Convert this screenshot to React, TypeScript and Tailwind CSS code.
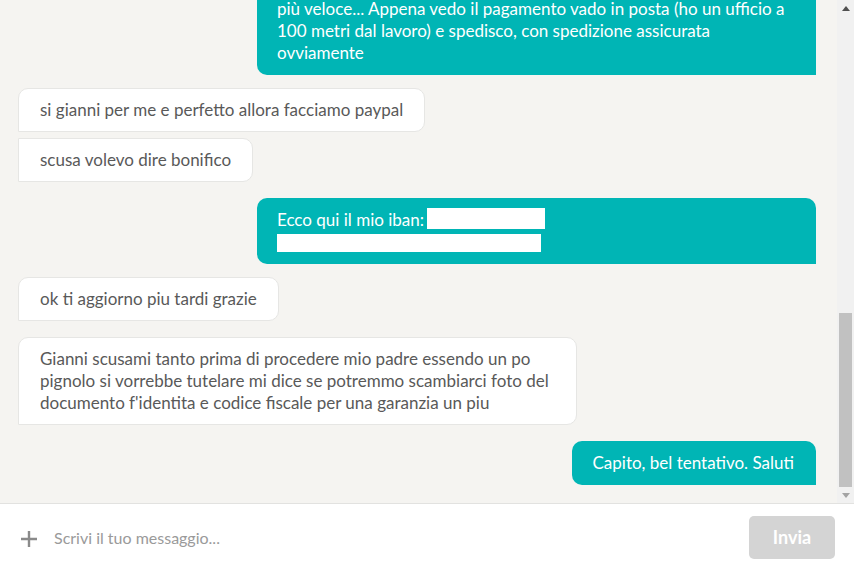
import React from 'react';

type Msg = { id: number; from: 'me' | 'them'; lines: React.ReactNode[]; first?: boolean; mt: string; wide?: boolean };

const MESSAGES: Msg[] = [
  {
    id: 1,
    from: 'me',
    mt: 'mt-0',
    wide: true,
    lines: [
      'più veloce... Appena vedo il pagamento vado in posta (ho un ufficio a',
      '100 metri dal lavoro) e spedisco, con spedizione assicurata',
      'ovviamente',
    ],
  },
  { id: 2, from: 'them', mt: 'mt-[13px]', first: true, lines: ['si gianni per me e perfetto allora facciamo paypal'] },
  { id: 3, from: 'them', mt: 'mt-[6px]', lines: ['scusa volevo dire bonifico'] },
  {
    id: 4,
    from: 'me',
    mt: 'mt-4',
    wide: true,
    lines: [
      <span key="a" className="flex items-start">
        Ecco qui il mio iban:
        <span className="ml-[3px] mt-[-1px] inline-block h-[21px] w-[118px] bg-white" />
      </span>,
      <span key="b" className="block pt-[3px] pb-[1px]">
        <span className="block h-[18px] w-[264px] bg-white" />
      </span>,
    ],
  },
  { id: 5, from: 'them', mt: 'mt-[13px]', first: true, lines: ['ok ti aggiorno piu tardi grazie'] },
  {
    id: 6,
    from: 'them',
    mt: 'mt-4',
    first: true,
    wide: true,
    lines: [
      'Gianni scusami tanto prima di procedere mio padre essendo un po',
      'pignolo si vorrebbe tutelare mi dice se potremmo scambiarci foto del',
      "documento f'identita e codice fiscale per una garanzia un piu",
    ],
  },
  { id: 7, from: 'me', mt: 'mt-4', lines: ['Capito, bel tentativo. Saluti'] },
];

const Bubble: React.FC<{ msg: Msg }> = ({ msg }) => {
  const mine = msg.from === 'me';
  return (
    <div className={`flex ${mine ? 'justify-end' : 'justify-start'} ${msg.mt}`}>
      <div
        className={`whitespace-nowrap text-[17px] leading-[22px] ${msg.wide ? 'w-[559px]' : ''} ${
          mine
            ? 'rounded-tl-[10px] rounded-tr-[10px] rounded-bl-[10px] bg-[#00b5b5] py-[11px] pl-[20px] pr-[22px] text-white'
            : `border border-[#e6e6e4] bg-white py-[10px] pl-[21px] pr-[21px] text-[#595959] rounded-tr-[10px] rounded-br-[10px] ${
                msg.first ? 'rounded-tl-[10px]' : ''
              }`
        }`}
      >
        {msg.lines.map((l, i) => (
          <div key={i}>{l}</div>
        ))}
      </div>
    </div>
  );
};

export default function App() {
  return (
    <div className="flex h-[571px] w-[854px] flex-col bg-white" style={{ fontFamily: 'Lato, "Liberation Sans", sans-serif' }}>
      {/* conversation */}
      <div className="flex h-[504px] shrink-0 border-b border-[#e2e2e0] bg-[#f5f4f1]">
        <div className="flex flex-1 flex-col justify-end overflow-hidden pl-[18px] pr-[21px] pb-[18px]">
          {MESSAGES.map(m => (
            <Bubble key={m.id} msg={m} />
          ))}
        </div>
        {/* scrollbar */}
        <div className="flex w-[17px] flex-col items-center bg-[#f1f1f1]">
          <div className="flex h-[17px] items-center justify-center">
            <svg width="8" height="5" viewBox="0 0 8 5">
              <path d="M0 5 L4 0 L8 5 Z" fill="#505050" />
            </svg>
          </div>
          <div className="flex-1" />
          <div className="h-[174px] w-[13px] bg-[#c1c1c1]" />
          <div className="flex h-[16px] items-center justify-center">
            <svg width="8" height="5" viewBox="0 0 8 5">
              <path d="M0 0 L8 0 L4 5 Z" fill="#a3a3a3" />
            </svg>
          </div>
        </div>
      </div>

      {/* composer */}
      <div className="flex flex-1 items-center pl-[20px] pr-[19px]">
        <svg width="18" height="18" viewBox="0 0 18 18" className="mt-[3px] shrink-0">
          <path d="M9 1 V17 M1 9 H17" stroke="#8a8a8a" strokeWidth="2.4" />
        </svg>
        <input
          placeholder="Scrivi il tuo messaggio..."
          className="ml-[16px] flex-1 bg-transparent text-[16px] text-[#555] placeholder-[#9a9a9a] outline-none"
        />
        <button className="h-[43px] w-[86px] rounded-[5px] bg-[#d4d4d4] text-[18px] font-bold text-white">
          Invia
        </button>
      </div>
    </div>
  );
}
